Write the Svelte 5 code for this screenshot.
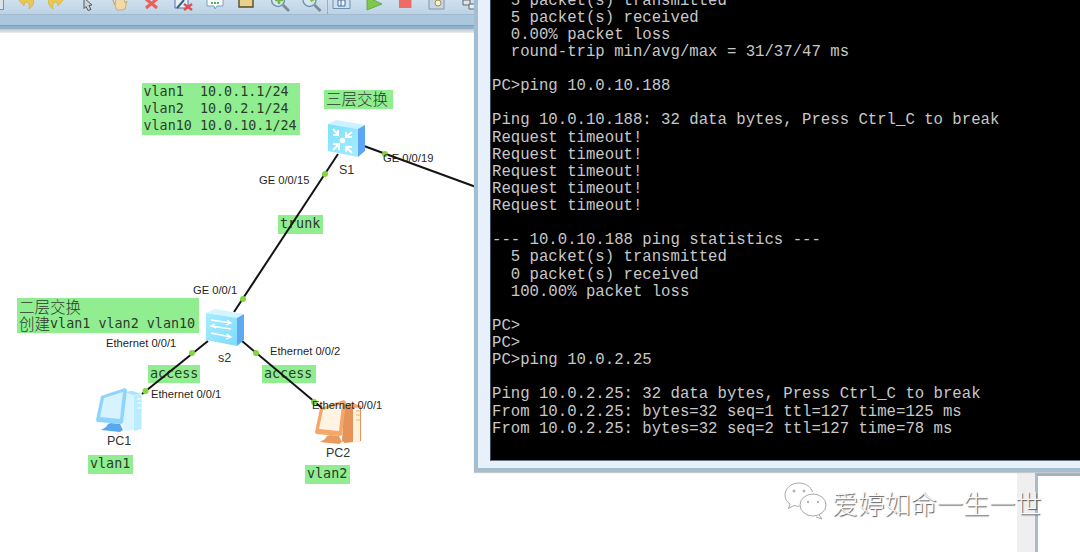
<script>
  const lines = [
    '  5 packet(s) transmitted',
    '  5 packet(s) received',
    '  0.00% packet loss',
    '  round-trip min/avg/max = 31/37/47 ms',
    '',
    'PC>ping 10.0.10.188',
    '',
    'Ping 10.0.10.188: 32 data bytes, Press Ctrl_C to break',
    'Request timeout!',
    'Request timeout!',
    'Request timeout!',
    'Request timeout!',
    'Request timeout!',
    '',
    '--- 10.0.10.188 ping statistics ---',
    '  5 packet(s) transmitted',
    '  0 packet(s) received',
    '  100.00% packet loss',
    '',
    'PC>',
    'PC>',
    'PC>ping 10.0.2.25',
    '',
    'Ping 10.0.2.25: 32 data bytes, Press Ctrl_C to break',
    'From 10.0.2.25: bytes=32 seq=1 ttl=127 time=125 ms',
    'From 10.0.2.25: bytes=32 seq=2 ttl=127 time=78 ms'
  ];

  const links = [
    [338, 154, 234, 312],
    [364, 146, 476, 187],
    [208, 341, 142, 394],
    [242, 341, 322, 408]
  ];
  const dots = [
    [325, 174], [243, 299], [385, 154], [192, 353],
    [145.5, 391], [256, 353], [314, 402]
  ];
  const ports = [
    { t: 'GE 0/0/15', x: 259, y: 173 },
    { t: 'GE 0/0/19', x: 383, y: 151 },
    { t: 'GE 0/0/1', x: 193, y: 283 },
    { t: 'Ethernet 0/0/1', x: 106, y: 336 },
    { t: 'Ethernet 0/0/2', x: 270, y: 344 },
    { t: 'Ethernet 0/0/1', x: 151, y: 387 },
    { t: 'Ethernet 0/0/1', x: 312, y: 398 }
  ];
  const names = [
    { t: 'S1', x: 339, y: 163 },
    { t: 's2', x: 218, y: 351 },
    { t: 'PC1', x: 107, y: 434 },
    { t: 'PC2', x: 326, y: 446 }
  ];
  const notes = [
    { t: 'vlan1  10.0.1.1/24\nvlan2  10.0.2.1/24\nvlan10 10.0.10.1/24', x: 141.5, y: 83, w: 158.5, h: 52 },
    { t: '三层交换', x: 324, y: 90, w: 69, h: 19 },
    { t: 'trunk', x: 278, y: 215, w: 45, h: 19 },
    { t: '二层交换\n创建vlan1 vlan2 vlan10', x: 17, y: 298, w: 182, h: 35 },
    { t: 'access', x: 148, y: 365, w: 52, h: 18 },
    { t: 'access', x: 262, y: 365, w: 54, h: 18 },
    { t: 'vlan1', x: 88, y: 455, w: 45, h: 19 },
    { t: 'vlan2', x: 305, y: 465, w: 45, h: 19 }
  ];
  const parts = (t) => t.split(/([\u4e00-\u9fff]+)/);

  const blue = { tower: '#d8f4ff', top: '#a9e2fb', side: '#b9ecff', slot: '#fff', base: '#58a8ef', frame: '#8ed4fb', screen: '#d6f3ff' };
  const orange = { tower: '#e59358', top: '#f3b27c', side: '#fff2dc', slot: '#eeb07a', base: '#ea9a5e', frame: '#f4a768', screen: '#fff4e4' };
</script>

{#snippet pc(c, dx, dy)}
  <g transform="translate({dx} {dy})">
    <path d="M125 392l8-1 9 3v35l-16 2-3-2z" fill={c.tower} />
    <path d="M125 392l7-1 9 3-8 1z" fill={c.top} />
    <path d="M134 396l7-1v34l-7 2z" fill={c.side} />
    <path d="M137 399h4M137 403h4M137 408h4" stroke={c.slot} fill="none" />
    <path d="M108 424l3-1 9 1 3 6-3 2-19-2 5-3z" fill={c.base} />
    <path d="M101 396l24-8 2 2-4 33-2 1-24-2-1-2z" fill={c.frame} />
    <path d="M104 398l19-6-3 27-20-2z" fill={c.screen} />
  </g>
{/snippet}

<div class="page">
  <header class="chrome">
    <div class="toolbar">
      <span class="stub"></span>
      <svg viewBox="0 0 28 15"><path d="M6-2l7 8 1-4c4 0 5 3 4 7 5-3 6-9 3-12z" fill="#e9c84e" stroke="#d0a838" stroke-width=".6"/></svg>
      <svg viewBox="0 0 28 15"><path d="M22-2l-7 8-1-4c-4 0-5 3-4 7-5-3-6-9-3-12z" fill="#e9c84e" stroke="#d0a838" stroke-width=".6"/></svg>
      <svg viewBox="0 0 28 15"><path d="M10-2l8 7-3 .5 2 4-3 1-2-4-2 2z" fill="#cfd3d6" stroke="#55585c" stroke-width="1"/></svg>
      <svg viewBox="0 0 28 15"><path d="M6 -2l3 7 1-7h8l1 5 2-2-2 8-4 1h-4z" fill="#f2d9a6" stroke="#c99f60" stroke-width=".8"/></svg>
      <svg viewBox="0 0 28 15"><path d="M9-1l11 9M20-1L9 8" stroke="#e8625a" stroke-width="3.2"/></svg>
      <svg viewBox="0 0 28 15"><path d="M6-1h13v9H6z" fill="#e8eef5" stroke="#5577a0"/><path d="M8 8l7-8" stroke="#36618f" stroke-width="2"/><path d="M15 4l8 6M23 4l-8 6" stroke="#de5050" stroke-width="2.4"/></svg>
      <svg viewBox="0 0 28 15"><path d="M6-2h16v8h-6l-2 3-1-3H6z" fill="#f6fafc" stroke="#7f9fb6"/><path d="M10 2h2v2h-2zM13 2h2v2h-2zM16 2h2v2h-2z" fill="#58b860"/></svg>
      <svg viewBox="0 0 28 15"><path d="M7-2h14v9H7z" fill="#e8d18a" stroke="#5d4a24" stroke-width="1.4"/></svg>
      <svg viewBox="0 0 28 15"><g transform="translate(2 0)"><circle cx="12" cy="0" r="6.500" fill="#d6e6f2" stroke="#6f93ad" stroke-width="1.400"/><path d="M17 5l6 6" stroke="#7b8a94" stroke-width="2.600"/><path d="M9 0h8M13-4v8" stroke="#72b840" stroke-width="2.600"/></g></svg>
      <svg viewBox="0 0 28 15"><g transform="translate(2.500 0)"><circle cx="12" cy="0" r="6.500" fill="#d6e6f2" stroke="#6f93ad" stroke-width="1.400"/><path d="M17 5l6 6" stroke="#7b8a94" stroke-width="2.600"/><path d="M13 1l7-4" stroke="#86c040" stroke-width="2.600"/></g></svg>
      <span class="divider"></span>
      <svg viewBox="0 0 28 15"><path d="M5-2h17v10.500H5z" fill="#cfe0ee" stroke="#6e8fae"/><path d="M10 0h7v6h-7z" fill="#f2f7fb" stroke="#3f6aa6"/><path d="M13 0v6" stroke="#3f6aa6"/></svg>
      <svg viewBox="0 0 28 15"><path d="M7-3l15 7-15 6z" fill="#7ec850" stroke="#5c9c38" stroke-width=".8"/></svg>
      <svg viewBox="0 0 28 15"><path d="M8-2h12.500v10H8z" fill="#f06a68"/></svg>
      <svg viewBox="0 0 28 15"><path d="M6-2h15v11H6z" fill="#c9d5e0" stroke="#8496a8"/><circle cx="15" cy="3" r="3" fill="#f4f0d6" stroke="#a08f50"/></svg>
      <svg viewBox="0 0 28 15"><path d="M9 0h7v5H9z" fill="#dfe4e8" stroke="#60666c"/><path d="M15 4h8v5h-8z" fill="#e9edf0" stroke="#60666c"/></svg>
    </div>
    <div class="band"></div>
    <div class="rule"></div>
  </header>

  <main class="canvas">
    {#each notes as n}
      <div class="note" style="left:{n.x}px;top:{n.y}px;width:{n.w}px;height:{n.h}px">{#each parts(n.t) as p, i}{#if i % 2}<span class="cjk">{p}</span>{:else}{p}{/if}{/each}</div>
    {/each}

    <svg class="topology" viewBox="0 0 1080 552" width="1080" height="552">
      {#each links as l}
        <line x1={l[0]} y1={l[1]} x2={l[2]} y2={l[3]} stroke="#141414" stroke-width="2" />
      {/each}

      <defs>
        <linearGradient id="s1face" x1="0" y1="0" x2="1" y2="1">
          <stop offset="0" stop-color="#7fe0fb" />
          <stop offset="1" stop-color="#a8ecff" />
        </linearGradient>
        <linearGradient id="s2face" x1="0" y1="0" x2="1" y2="1">
          <stop offset="0" stop-color="#a9ecff" />
          <stop offset="1" stop-color="#7fdcf8" />
        </linearGradient>
      </defs>

      <!-- S1 -->
      <path d="M328 124l8-4 29 5-7 4z" fill="#c8f3ff" />
      <path d="M358 129l7-4v26l-7 6z" fill="#5da6f4" />
      <path d="M328 124l30 5v28l-30-6z" fill="url(#s1face)" />
      <g fill="none" stroke="#fff" stroke-width="2">
        <path d="M333 129l5 6M338 130v5h-5M352 132l-6 5M346 132v5h6M333 150l6-6M333 144h6v6M352 153l-6-6M346 152v-5h6" />
      </g>
      <circle cx="342.500" cy="140.500" r="2.800" fill="#fff" />

      <!-- s2 -->
      <path d="M206 313l9-4 29 5-7 4z" fill="#d3f5ff" />
      <path d="M237 318l7-4v26l-7 6z" fill="#5fa8f4" />
      <path d="M206 313l31 5v28l-31-6z" fill="url(#s2face)" />
      <g fill="none" stroke="#fff" stroke-width="1.300">
        <path d="M211 320l20 3M227 320l4 3-5 2M231 329l-20-3M215 324l-4 2 5 2M211 333l20 4M227 334l4 3-5 2" />
      </g>

      {@render pc(blue, 0, 0)}
      {@render pc(orange, 219, 12)}

      {#each dots as d}
        <circle cx={d[0]} cy={d[1]} r="3" fill="#84d63e" />
      {/each}
    </svg>

    {#each names as n}
      <span class="name" style="left:{n.x}px;top:{n.y}px">{n.t}</span>
    {/each}
    {#each ports as p}
      <span class="port" style="left:{p.x}px;top:{p.y}px">{p.t}</span>
    {/each}
  </main>

  <section class="backwin">
    <div class="strip"></div>
    <div class="backframe"></div>
  </section>

  <section class="console">
    <pre class="term">{lines.join('\n')}</pre>
  </section>

  <div class="mark">
    <svg class="wechat" viewBox="0 0 44 40" width="44" height="40">
      <g fill="none" stroke="#a8a8a8" stroke-width="1">
        <path d="M16 1C8 1 2 6.500 2 13c0 4 2 7 5 9l-1.500 4.500 5.500-3c2 .6 3.500.8 5.500.8" />
        <path d="M16 1c6.500 0 12 3.800 13.500 9" />
        <ellipse cx="30" cy="23" rx="13" ry="11" fill="#fff" />
        <path d="M36 33l3 4-6-2" fill="#fff" />
      </g>
      <g fill="#b5b5b5">
        <circle cx="11" cy="9" r="1.500" /><circle cx="21" cy="9" r="1.500" />
        <circle cx="25" cy="20" r="1.200" /><circle cx="35" cy="20" r="1.200" />
      </g>
    </svg>
    <span class="marktext">爱婷如命一生一世</span>
  </div>
</div>

<style>
  :global(body) {
    margin: 0;
    background: #fff;
  }
  .page {
    position: relative;
    width: 1080px;
    height: 552px;
    overflow: hidden;
    background: #fff;
  }
  .chrome {
    display: flex;
    flex-direction: column;
    height: 33px;
  }
  .toolbar {
    display: flex;
    align-items: flex-start;
    gap: 3.6px;
    height: 14px;
    flex: none;
    padding-left: 4px;
    overflow: hidden;
    background: linear-gradient(#cfe0ee, #bcd3e5);
    border-bottom: 1px solid #a2bace;
  }
  .toolbar svg {
    width: 28px;
    height: 15px;
    flex: none;
    overflow: hidden;
  }
  .stub {
    width: 3px;
    height: 9px;
    margin-left: -4px;
    margin-right: 3.400px;
    background: #dbe3ea;
    border: 1px solid #7c93a6;
    border-top: 0;
    border-left: 0;
    flex: none;
  }
  .divider {
    width: 1px;
    height: 14px;
    margin-right: -3.600px;
    background: #97b0c4;
    flex: none;
  }
  .band {
    height: 10px;
    flex: none;
    background: #abc7de;
  }
  .rule {
    height: 8px;
    flex: none;
    background: linear-gradient(#7ba0b8 0 1px, #8fb1ca 1px 4px, #bcc6ce 4px, #dde1e5 7px, #f3f4f5);
  }
  .canvas {
    position: absolute;
    inset: 0;
    overflow: hidden;
    pointer-events: none;
  }
  .note {
    position: absolute;
    box-sizing: border-box;
    padding: 0 2px;
    background: #90ee90;
    color: #2e3a2e;
    font: 13.400px/17px "DejaVu Sans Mono", "Noto Sans CJK SC", monospace;
    white-space: pre;
  }
  .cjk {
    font-family: "Noto Sans CJK SC", sans-serif;
    font-size: 15.500px;
    font-weight: 300;
    line-height: 17px;
    vertical-align: top;
  }
  .topology {
    position: absolute;
    left: 0;
    top: 0;
  }
  .name, .port {
    position: absolute;
    font-family: "Liberation Sans", Arial, sans-serif;
    white-space: nowrap;
    line-height: 14px;
  }
  .name {
    font-size: 12.500px;
    color: #333;
  }
  .port {
    font-size: 11.200px;
    color: #1f1f1f;
  }
  .console {
    position: absolute;
    left: 474px;
    top: -7.400px;
    width: 620px;
    height: 479.400px;
    box-sizing: border-box;
    display: flex;
    padding: 0 0 7px 12px;
    border: 4px solid #a3bed2;
    border-top: 0;
    border-right: 0;
    background: #e8f0fc;
    box-shadow: 0 1px 1px #c8c8c8;
  }
  .term {
    flex: 1;
    margin: 0;
    background: #000;
    color: #c8c8c8;
    font: 15.660px/17.130px "Liberation Mono", "Courier New", monospace;
    padding-left: 1px;
    overflow: hidden;
    border-left: 1px solid #3a4a5a;
    border-bottom: 1px solid #6a7480;
  }
  .backwin {
    position: absolute;
    left: 1017px;
    top: 473px;
    right: 0;
    bottom: 0;
    display: flex;
  }
  .strip {
    width: 18px;
    background: #efefef;
  }
  .backframe {
    flex: 1;
    border-left: 3px solid #a3bed2;
    border-top: 3px solid #9fb2c2;
    background: #fff;
  }
  .mark {
    position: absolute;
    left: 783px;
    top: 482px;
    display: flex;
    align-items: flex-start;
    gap: 5px;
  }
  .wechat {
    flex: none;
  }
  .marktext {
    margin-top: 3px;
    font: 300 26.200px/36px "Noto Sans CJK SC", sans-serif;
    color: #fbfbfb;
    text-shadow: 1px 1px 1px #555;
    white-space: nowrap;
  }
</style>
